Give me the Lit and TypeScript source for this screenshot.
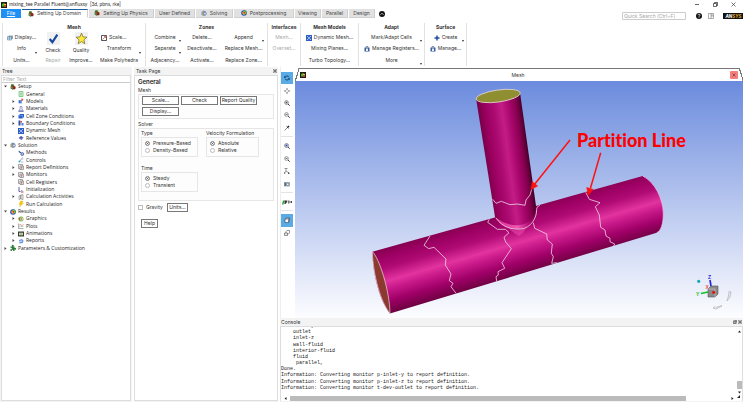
import { LitElement, html, css, svg } from "lit";
import { customElement } from "lit/decorators.js";
import { classMap } from "lit/directives/class-map.js";

/* ---- icon set, every glyph on a 12x12 grid ---- */
const glyphs: Record<string, unknown> = {
  app: svg`<rect width="12" height="12" fill="#1c1c10"/><path d="M2 9V4l4-2v7z" fill="#3fb53a"/><path d="M6 3l4 1v3H6z" fill="#f4c430"/><path d="M6 7h4v3H6z" fill="#d8352a"/>`,
  setup: svg`<circle cx="5" cy="4" r="3.6" fill="#6b5b1f"/><path d="M1 5l5 4v3L1 9z" fill="#3d8a3c"/><circle cx="8" cy="7.600" r="3.600" fill="#b5372c"/><path d="M6 6h4M6 9h4M8 5v5" stroke="#3a2a16" stroke-width="1"/><path d="M2 2l3-1 3 2" stroke="#3f9a3f" stroke-width="1.500" fill="none"/>`,
  solution: svg`<path d="M1 4l4-3 5 2v7l-4 2-5-2z" fill="#7f93b8"/><path d="M2 4l3 1v6L2 9z" fill="#c9a43b"/><circle cx="8" cy="7" r="3" fill="#c5d2ea" stroke="#4a63a0" stroke-width="1"/>`,
  results: svg`<circle cx="6" cy="6" r="5.600" fill="#2446c8"/><path d="M6 .4a5.600 5.600 0 0 1 5 8L6 6z" fill="#28b14a"/><circle cx="6" cy="6" r="3.400" fill="#f5d21f"/><circle cx="6.500" cy="5.600" r="1.900" fill="#e0301e"/>`,
  params: svg`<path d="M1 3h3a2 2 0 1 1 3 0h2v3a2 2 0 1 1 0 3v3H6a1.500 1.500 0 1 0-2 0H1V8a1.600 1.600 0 1 0 0-2z" fill="#2e7d3c"/>`,
  page: svg`<path d="M2 1h8v10H2z" fill="#d9f2dc" stroke="#58b368" stroke-width="1.300"/><path d="M4 4h4M4 6h4M4 8h4" stroke="#58b368"/>`,
  models: svg`<path d="M1 4h7v7H1z" fill="#7fa4e6"/><path d="M2 5h3v5H2z" fill="#3565c9"/><path d="M7 1l4 1-2 4-3-1z" fill="#e0564b"/>`,
  materials: svg`<path d="M4 1h4v5l3 4v1H1v-1l3-4z" fill="#e3e5f6" stroke="#5b62ab" stroke-width="1"/><path d="M2 9h8v2H2z" fill="#5b62ab"/>`,
  cell: svg`<path d="M1 5l3-3h8v6l-3 3H1z" fill="#2a62c8"/><path d="M1 5h8v6" stroke="#9cc0f5" stroke-width="1" fill="none"/>`,
  boundary: svg`<path d="M1 1h4v10H1z" fill="#2950b0"/><path d="M5 2h3v3H5z" fill="#d6493c"/><path d="M7 6h4v5H7z" fill="#4d7be0"/><path d="M5 6h2" stroke="#d6493c"/>`,
  dynamic: svg`<rect width="12" height="12" fill="#2d5fc4"/><path d="M2 2l3 3M10 2L7 5M2 10l3-3M10 10L7 7" stroke="#fff" stroke-width="1.300"/><circle cx="6" cy="6" r="1.500" fill="#d6e4ff"/>`,
  values: svg`<path d="M1 6l5-4 5 3-4 5z" fill="#4a49b5"/><path d="M3 6l4 1 3-2" stroke="#bdbcf2" fill="none"/>`,
  methods: svg`<path d="M2 1l3 3-1 2-3-2z" fill="#3458a8"/><path d="M4 4l5 5" stroke="#3458a8" stroke-width="2"/><circle cx="8.500" cy="8" r="3" fill="#a7b6dd" stroke="#2d468b" stroke-width="1.200"/>`,
  controls: svg`<path d="M9 1L4 8" stroke="#6b86a0" stroke-width="1.300"/><circle cx="3" cy="9" r="2" fill="#3ea0d0"/><path d="M6 10h5M8 4h3" stroke="#7c8a95"/>`,
  report: svg`<path d="M1 1h8v8H1z" fill="#eee" stroke="#555" stroke-width="1"/><path d="M4 4h7v7H4z" fill="#fff" stroke="#555" stroke-width="1"/><path d="M5 6h5M5 8h5M7 5v6" stroke="#a05a6a"/>`,
  init: svg`<path d="M2 0v9h3" stroke="#333a90" stroke-width="1.600" fill="none"/><path d="M6 10h5" stroke="#c33c3c" stroke-width="2"/><path d="M6 6l3 2" stroke="#333a90"/>`,
  calc: svg`<path d="M2 11V4l3-2v8zM6 10V2l4-1v10z" fill="#eee" stroke="#666" stroke-width="1"/>`,
  run: svg`<path d="M5 0h5L8 4h3L3 12l2-5H2z" fill="#f6c90e" stroke="#d79a00" stroke-width=".5"/>`,
  graphics: svg`<circle cx="6" cy="6" r="5" fill="#7ab648"/><circle cx="7" cy="6" r="3" fill="#e7dca0"/><path d="M1 3l4 3-3 3z" fill="#c04a3c"/><path d="M7 4v4" stroke="#4762b0"/>`,
  plots: svg`<path d="M1 1v10h10" stroke="#5a5f66" stroke-width="1" fill="none"/><path d="M2 4l3-1 3 2 3-2" stroke="#d04b4b" fill="none"/><path d="M2 8l3-2 3 1 3-1" stroke="#4b9a5b" fill="none"/>`,
  anim: svg`<rect y="1" width="12" height="10" fill="#3a3f36"/><rect x="2" y="3.500" width="8" height="5" fill="#c6d6b0"/><path d="M4 6h4" stroke="#6d7f55"/>`,
  reports: svg`<path d="M2 4l6-2 3 3-1 5-7 1z" fill="#6f9ae3"/><path d="M3 7l5-1" stroke="#fff" stroke-width="1.500"/>`,
  display: svg`<path d="M3 1h9v7H3z" fill="#8aa9bf"/><path d="M1 3h8v7H1z" fill="#dcebf4" stroke="#44708f" stroke-width="1"/><path d="M1 6h8M5 3v7" stroke="#44708f"/>`,
  scale: svg`<path d="M1 1h10v10H1z" fill="#fff" stroke="#222" stroke-width="1.500"/><path d="M3 9l6-6M6 3h3v3" stroke="#b33" stroke-width="1.200" fill="none"/>`,
  check: svg`<rect width="12" height="12" fill="#f1f1f1"/><path d="M2.500 6.500l2.500 3 4.500-7" stroke="#17479e" stroke-width="2" fill="none"/>`,
  star: svg`<rect width="12" height="12" fill="#f1f1f1"/><path d="M6 1l1.400 3.500 3.600.3-2.800 2.400.9 3.600L6 8.900l-3.100 1.900.9-3.600L1 4.800l3.600-.3z" fill="#ffe93b" stroke="#77702a" stroke-width=".7"/>`,
  plus: svg`<path d="M6 1v10M1 6h10" stroke="#1f4e9e" stroke-width="3"/>`,
  manage: svg`<path d="M1 3h10v8H1z" fill="#3a5f9e"/><path d="M4 3V1h4v2" stroke="#27457a" fill="none"/><path d="M4 5h4v5H4z" fill="#e4edf9"/>`,
  refresh: svg`<path d="M10 4.500A4.400 4.400 0 0 0 2 4.500M2 7.500a4.400 4.400 0 0 0 8 0" stroke="#123a5e" stroke-width="1.700" fill="none"/><path d="M.5 1.500v4h4zM11.500 10.500v-4h-4z" fill="#123a5e"/>`,
  pan: svg`<path d="M6 0l2 3H4zM6 12l2-3H4zM0 6l3-2v4zM12 6L9 4v4z" fill="#444"/><path d="M5 5h2v2H5z" fill="#bbb"/>`,
  zoomIn: svg`<circle cx="5" cy="5" r="3.800" fill="#eef2f2" stroke="#555" stroke-width="1.200"/><path d="M3 5h4M5 3v4" stroke="#333" stroke-width="1.200"/><path d="M8 8l3.500 3.500" stroke="#444" stroke-width="2"/>`,
  zoomOut: svg`<circle cx="5" cy="5" r="3.800" fill="#eef2f2" stroke="#666" stroke-width="1.200"/><path d="M3 5h4" stroke="#333" stroke-width="1.200"/><path d="M8 8l3.500 3.500" stroke="#444" stroke-width="2"/>`,
  probe: svg`<path d="M1 11l6-6" stroke="#8a8a70" stroke-width="2"/><path d="M6 4l3-3 2 2-3 3z" fill="#222"/><path d="M5 3l4 4" stroke="#222" stroke-width="1.300"/>`,
  zoomFit: svg`<circle cx="5" cy="5" r="4" fill="#fff" stroke="#555" stroke-width="1.200"/><path d="M3 3h4v4H3z" fill="#2c4fa0"/><path d="M8 8l3.500 3.500" stroke="#444" stroke-width="2"/>`,
  axes: svg`<path d="M1 1h6M4 1v5L1 11M4 6l6 4" stroke="#555" stroke-width="1.200" fill="none"/><path d="M8 8l4 3-4 1zM0 8l3 3H0z" fill="#444"/>`,
  camera: svg`<rect y="2" width="12" height="9" fill="#a9b6c0"/><path d="M1 3h3v7H1z" fill="#5a6b7a"/><circle cx="7.500" cy="6.500" r="2.500" fill="#fff" stroke="#3d5266" stroke-width="1.200"/>`,
  cube: svg`<path d="M2 4l2-2h7v6l-2 3H2z" fill="#fff" stroke="#2b3c4c" stroke-width="1.200"/><path d="M2 4h7v7M9 4l2-2" stroke="#2b3c4c" stroke-width="1.200" fill="none"/>`,
  cubes: svg`<path d="M4 3l2-2h5v5L9 8H4z" fill="#fff" stroke="#444" stroke-width="1.100"/><path d="M1 6h6v5H1z" fill="#e8e8e8" stroke="#444" stroke-width="1.100"/>`,
  views: svg`<path d="M-4 11l2-8h3l-2 8z" fill="#22a52e"/><path d="M1 3h5v3L3 10H1z" fill="#333"/><path d="M7 3h4v6H8z" fill="#777"/><path d="M11 6h5M14 4l2 2-2 2" stroke="#222" stroke-width="1.500" fill="none"/>`,
};

const icon = (name: string, cls = "") =>
  html`<svg class="ic ${cls}" viewBox="0 0 12 12" aria-hidden="true">${glyphs[name]}</svg>`;

const shared = css`
  :host { display: block; font-family: Inter, Roboto, "Liberation Sans", sans-serif; font-size: 5px; line-height: 7px; color: #333; }
  * { box-sizing: border-box; }
  button, input { font: inherit; color: inherit; margin: 0; }
  button { background: none; border: 0; padding: 0; white-space: nowrap; display: flex; align-items: center; justify-content: center; }
  .ic { width: 6px; height: 6px; flex: none; overflow: visible; }
`;

@customElement("title-strip")
class TitleStrip extends LitElement {
  static styles = [shared, css`
    .title { display: flex; align-items: center; height: 9px; padding: 0 7px 0 1px; gap: 2px; }
    .title span { flex: 1; font-family: Lato, sans-serif; color: #333; }
    .win { width: 6px; height: 6px; margin-left: 10px; }
    .win svg { width: 5px; height: 5px; }
    .bar { display: flex; align-items: flex-start; height: 12px; }
    .tabs { display: flex; align-items: stretch; height: 9px; padding-left: 1px; gap: 1px; flex: 1; }
    .tab { background: #e1e1e1; border: solid #cfcfcf; border-width: 0 1px 1px 0; gap: 3px; color: #444; }
    .tab.file { width: 20px; background: #1e90f5; color: #fff; border: 0; text-decoration: underline; }
    .tab.on { background: #fff; border-top: 1px solid #1d5f9c; border-bottom-color: #fff; }
    .w66 { width: 66px; } .w65 { width: 65px; } .w40 { width: 40px; } .w37 { width: 37px; } .w60 { width: 60px; } .w26 { width: 26px; }
    .round { width: 6px; height: 6px; align-self: center; margin-left: 3px; }
    .tools { display: flex; align-items: center; gap: 6px; height: 12px; padding-top: 1px; }
    input { width: 64px; height: 8px; border: 1px solid #ccc; border-radius: 1px; padding: 0 1px; background: #fff; margin-right: 4px; }
    input::placeholder { color: #a5a5a5; opacity: 1; }
    .ansys { width: 20px; height: 6px; margin-left: 3px; }
  `];
  render() {
    const tabs: [string, string, string][] = [
      ["Setting Up Domain", "w66 on", "setup"], ["Setting Up Physics", "w65", "setup"], ["User Defined", "w40", ""],
      ["Solving", "w37", "solution"], ["Postprocessing", "w60", "results"], ["Viewing", "w26", ""], ["Parallel", "w26", ""], ["Design", "w26", ""],
    ];
    return html`
      <div class="title">${icon("app")}<span>mixing_tee Parallel Fluent@anfluxsy&nbsp; [3d, pbns, rke]</span>
        <button class="win" aria-label="Minimize"><svg viewBox="0 0 10 10"><path d="M0 5h8" stroke="#333" stroke-width="1.500"/></svg></button>
        <button class="win" aria-label="Restore"><svg viewBox="0 0 10 10"><path d="M1 3h6v6H1zM3 3V1h6v6H7" fill="none" stroke="#333" stroke-width="1.500"/></svg></button>
        <button class="win" aria-label="Close"><svg viewBox="0 0 10 10"><path d="M1 1l8 8M9 1L1 9" stroke="#333" stroke-width="1.300"/></svg></button>
      </div>
      <div class="bar">
        <nav class="tabs"><button class="tab file">File</button>
          ${tabs.map(([t, c, i]) => html`<button class="tab ${c}">${i ? icon(i) : ""}${t}</button>`)}
          <button class="round" aria-label="Collapse ribbon"><svg class="ic" viewBox="0 0 12 12"><circle cx="6" cy="6" r="6" fill="#111"/><path d="M3 7.500l3-3 3 3" stroke="#fff" stroke-width="1.500" fill="none"/></svg></button>
        </nav>
        <div class="tools">
          <input type="search" placeholder="Quick Search (Ctrl+F)" aria-label="Quick Search">
          <button aria-label="Help"><svg class="ic" viewBox="0 0 12 12"><circle cx="6" cy="6" r="6" fill="#111"/><path d="M4 4.500c0-3 4.300-2.500 4 0C7.800 6 6 6 6 7.500M6 8.800v1.400" stroke="#fff" stroke-width="1.500" fill="none"/></svg></button>
          <button aria-label="Layout"><svg class="ic" viewBox="0 0 12 12"><path d="M1 1h10v10H1zM6 1v10M6 6h5M8 1v5" fill="none" stroke="#777" stroke-width="1.200"/></svg></button>
          <svg class="ansys" viewBox="0 0 40 12" role="img" aria-label="ANSYS"><rect width="40" height="12" fill="#111"/><text x="5" y="9" font-size="9" font-weight="700" font-style="italic" font-family="Inter, sans-serif" fill="#fff">AN<tspan fill="#e0a92c">SYS</tspan></text></svg>
        </div>
      </div>`;
  }
}

type Cell = { t: string; i?: string; more?: boolean; off?: boolean; big?: boolean };
type Column = { c: string; cells: Cell[] };
const groups: { title: string; cls: string; cols: Column[] }[] = [
  { title: "Mesh", cls: "g-mesh", cols: [
    { c: "c35", cells: [{ t: "Display...", i: "display" }, { t: "Info", more: true }, { t: "Units..." }] },
    { c: "c28", cells: [{ t: "Check", i: "check", big: true }, { t: "Repair", off: true }] },
    { c: "c28", cells: [{ t: "Quality", i: "star", big: true }, { t: "Improve..." }] },
    { c: "c48", cells: [{ t: "Scale...", i: "scale" }, { t: "Transform", more: true }, { t: "Make Polyhedra" }] }] },
  { title: "Zones", cls: "g-zones", cols: [
    { c: "c35", cells: [{ t: "Combine", more: true }, { t: "Separate", more: true }, { t: "Adjacency..." }] },
    { c: "c39", cells: [{ t: "Delete..." }, { t: "Deactivate..." }, { t: "Activate..." }] },
    { c: "c44", cells: [{ t: "Append", more: true }, { t: "Replace Mesh..." }, { t: "Replace Zone..." }] }] },
  { title: "Interfaces", cls: "g-int", cols: [{ c: "grow", cells: [{ t: "Mesh...", off: true }, { t: "Overset...", off: true }, { t: "" }] }] },
  { title: "Mesh Models", cls: "g-mod", cols: [{ c: "grow", cells: [{ t: "Dynamic Mesh...", i: "dynamic" }, { t: "Mixing Planes..." }, { t: "Turbo Topology..." }] }] },
  { title: "Adapt", cls: "g-adapt", cols: [{ c: "grow", cells: [{ t: "Mark/Adapt Cells", more: true }, { t: "Manage Registers...", i: "manage" }, { t: "More", more: true }] }] },
  { title: "Surface", cls: "g-surf", cols: [{ c: "grow", cells: [{ t: "Create", i: "plus", more: true }, { t: "Manage...", i: "manage" }, { t: "" }] }] },
];

@customElement("ribbon-bar")
class RibbonBar extends LitElement {
  static styles = [shared, css`
    .ribbon { display: flex; height: 46px; padding: 2px 0 1px 2px; }
    .group { border-right: 1px solid #e2e2e2; display: flex; flex-direction: column; flex: none; }
    .group:first-child { border-left: 1px solid #e2e2e2; }
    h2 { margin: 0; font-size: 5px; line-height: 9px; font-weight: 700; text-align: center; }
    .cols { display: flex; height: 34px; justify-content: center; }
    .col { display: grid; grid-template-rows: repeat(3, minmax(0, 1fr)); flex: none; }
    .col.grow { flex: 1; }
    button { position: relative; gap: 2px; min-width: 0; }
    .big { grid-row: span 2; flex-direction: column; }
    .big .ic { width: 13px; height: 13px; }
    .off { color: #aaa; }
    .more::after { content: ""; position: absolute; right: 2px; bottom: 1px; border: 1px solid transparent; border-top: 2px solid #333; border-bottom: 0; }
    .g-mesh { width: 144px; } .g-mesh .cols { justify-content: flex-start; padding-left: 1px; }
    .g-zones { width: 122px; } .g-int { width: 33px; } .g-mod { width: 58px; } .g-adapt { width: 66px; } .g-surf { width: 42px; }
    .c35 { width: 35px; } .c28 { width: 28px; } .c48 { width: 48px; } .c39 { width: 39px; } .c44 { width: 44px; }
    .c48 button:has(.ic) { justify-content: flex-start; padding-left: 6px; }
  `];
  render() {
    return html`<div class="ribbon">${groups.map(g => html`<section class="group ${g.cls}"><h2>${g.title}</h2>
      <div class="cols">${g.cols.map(col => html`<div class="col ${col.c}">${col.cells.map(c => c.t
        ? html`<button class=${classMap({ big: !!c.big, off: !!c.off, more: !!c.more })} ?disabled=${!!c.off}>${c.i ? icon(c.i) : ""}${c.t}</button>`
        : html`<span></span>`)}</div>`)}</div></section>`)}</div>`;
  }
}

const tree: [number, string, string, string][] = [
  [0, "v", "setup", "Setup"], [1, "", "page", "General"], [1, ">", "models", "Models"], [1, ">", "materials", "Materials"],
  [1, ">", "cell", "Cell Zone Conditions"], [1, ">", "boundary", "Boundary Conditions"], [1, "", "dynamic", "Dynamic Mesh"],
  [1, "", "values", "Reference Values"], [0, "v", "solution", "Solution"], [1, "", "methods", "Methods"], [1, "", "controls", "Controls"],
  [1, ">", "report", "Report Definitions"], [1, ">", "report", "Monitors"], [1, "", "report", "Cell Registers"], [1, "", "init", "Initialization"],
  [1, ">", "calc", "Calculation Activities"], [1, "", "run", "Run Calculation"], [0, "v", "results", "Results"], [1, ">", "graphics", "Graphics"],
  [1, ">", "plots", "Plots"], [1, ">", "anim", "Animations"], [1, ">", "reports", "Reports"], [0, ">", "params", "Parameters & Customization"],
];

@customElement("outline-tree")
class OutlineTree extends LitElement {
  static styles = [shared, css`
    :host { display: flex; flex-direction: column; background: #f3f3f3; padding: 0 1px 2px; }
    h2 { margin: 0; font-size: 5px; font-weight: 400; line-height: 8px; padding-left: 1px; }
    .body { flex: 1; background: #fff; border: 1px solid #ddd; }
    input { display: block; width: 100%; height: 7px; border: 0; border-bottom: 1px solid #ccc; padding: 0 1px; background: #fff; }
    input::placeholder { color: #aaa; opacity: 1; }
    ul { list-style: none; margin: 0; padding: 0 0 0 1px; height: 169px; display: grid; grid-auto-rows: minmax(0, 1fr); font-family: "Open Sans", "Noto Sans", sans-serif; color: #222; }
    li { display: flex; align-items: center; gap: 2px; }
    li.d1 { padding-left: 8px; }
    .tw { width: 5px; height: 5px; flex: none; }
    svg.tw { width: 3px; height: 3px; margin: 1px; }
  `];
  render() {
    return html`<h2>Tree</h2><div class="body"><input placeholder="Filter Text" aria-label="Filter Text">
      <ul role="tree">${tree.map(([d, m, i, t]) => html`<li role="treeitem" class="d${d}">
        ${m ? html`<svg class="tw" viewBox="0 0 6 6"><path d=${m === "v" ? "M0 1h6L3 5z" : "M1 0l4 3-4 3z"} fill="#444"/></svg>` : html`<span class="tw"></span>`}
        ${icon(i)}<span>${t}</span></li>`)}</ul></div>`;
  }
}

@customElement("task-page")
class TaskPage extends LitElement {
  static styles = [shared, css`
    :host { display: flex; flex-direction: column; background: #f3f3f3; padding: 0 0 2px; }
    header { display: flex; justify-content: space-between; align-items: center; height: 8px; padding: 0 1px 0 2px; }
    .x svg { width: 4px; height: 4px; }
    .body { flex: 1; background: #fff; border: 1px solid #ddd; padding: 2px 3px; }
    h3 { margin: 0; font-size: 6px; line-height: 8px; font-weight: 600; color: #222; }
    fieldset { border: 0; margin: 0; padding: 0; min-width: 0; display: block; }
    legend { padding: 0; line-height: 8px; display: block; }
    .box { border: 1px solid #e6e6e6; background: #fdfdfd; }
    .btns { display: grid; grid-template-columns: repeat(3, 37px); gap: 2px; padding: 1px 3px; height: 25px; align-content: start; }
    .btn { height: 9px; border: 1px solid #777; background: #fff; }
    .solver { height: 73px; padding: 0 2px; display: grid; grid-template-columns: 57px 53px; column-gap: 8px; grid-template-rows: 35px 28px; }
    .sec { margin-top: 1px; }
    .radios { padding: 2px 3px; height: 20px; display: grid; grid-auto-rows: 7px; align-content: center; }
    label { display: flex; align-items: center; gap: 3px; white-space: nowrap; }
    input { appearance: none; width: 5px; height: 5px; border: 1px solid #bbb; background: #fff; flex: none; }
    input[type="radio"] { border-radius: 50%; }
    input[type="radio"]:checked { background: #333; box-shadow: inset 0 0 0 1px #fff; border-color: #999; }
    .row { display: flex; gap: 4px; margin-top: 2px; align-items: center; }
    .units { width: 21px; }
    .help { width: 17px; margin: 7px 0 0 3px; }
  `];
  private choice(name: string, options: string[]) {
    return html`<div class="box radios">${options.map((o, i) => html`<label><input type="radio" name=${name} ?checked=${i === 0}>${o}</label>`)}</div>`;
  }
  render() {
    return html`<header><span>Task Page</span><button class="x" aria-label="Close"><svg viewBox="0 0 8 8"><path d="M0 0h8v8H0z" fill="#bbb"/><path d="M1 1l6 6M7 1L1 7" stroke="#333"/></svg></button></header>
      <div class="body"><h3>General</h3>
        <fieldset><legend>Mesh</legend><div class="box btns">${["Scale...", "Check", "Report Quality", "Display..."].map(b => html`<button class="btn">${b}</button>`)}</div></fieldset>
        <fieldset class="sec"><legend>Solver</legend><div class="box solver">
          <fieldset><legend>Type</legend>${this.choice("type", ["Pressure-Based", "Density-Based"])}</fieldset>
          <fieldset><legend>Velocity Formulation</legend>${this.choice("velocity", ["Absolute", "Relative"])}</fieldset>
          <fieldset><legend>Time</legend>${this.choice("time", ["Steady", "Transient"])}</fieldset>
        </div></fieldset>
        <div class="row"><label><input type="checkbox">Gravity</label><button class="btn units">Units...</button></div>
        <button class="btn help">Help</button>
      </div>`;
  }
}

@customElement("view-tools")
class ViewTools extends LitElement {
  static styles = [shared, css`
    :host { display: flex; flex-direction: column; padding: 5px 2px 0 0; background: #fff; border-left: 1px solid #eee; }
    .set { display: flex; flex-direction: column; }
    .set + .set { margin-top: 2px; border-top: 1px solid #e4e4e4; padding-top: 3px; }
    button { flex: 1; }
    button.on { background: #5aaae6; }
    .s5 { height: 62px; } .s4 { height: 54px; } .s1 { height: 16px; } .s2 { height: 29px; }
  `];
  render() {
    const sets: [string, string[]][] = [
      ["s5", ["refresh", "pan", "zoomIn", "zoomOut", "probe"]], ["s4", ["zoomFit", "zoomOut", "axes", "camera"]], ["s1", ["views"]], ["s2", ["cube", "cubes"]],
    ];
    return html`${sets.map(([c, names]) => html`<div class="set ${c}">${names.map(n =>
      html`<button aria-label=${n} class=${classMap({ on: n === "refresh" || n === "cube" })}>${icon(n)}</button>`)}</div>`)}`;
  }
}

@customElement("mesh-view")
class MeshView extends LitElement {
  static styles = [shared, css`
    :host { display: flex; flex-direction: column; }
    .tab { display: flex; align-items: center; height: 13px; margin: 1px 1px 0 4px; padding: 0 3px 0 1px; border-top: 1px solid #777; position: relative; }
    .tab::before, .tab::after { content: ""; position: absolute; top: -1px; height: 13px; width: 4px; }
    .tab::before { left: -4px; background: linear-gradient(107deg, transparent 45%, #777 46% 60%, transparent 61%); }
    .tab::after { right: -1px; background: #fff linear-gradient(73deg, transparent 45%, #777 46% 60%, transparent 61%); }
    .name { flex: 1; text-align: center; }
    .x { width: 8px; height: 8px; background: #f47f7f; border-radius: 1px; margin-right: 1px; }
    .x svg { width: 4px; height: 4px; }
    .stage { flex: 1; background: linear-gradient(#6b8bdd, #fdfdff); display: flex; }
    .stage svg { width: 100%; height: 237px; display: block; }
    .label { font: 900 18px Lato, "Open Sans", sans-serif; font-variant-ligatures: none; fill: #f00; }
    .axis { font: 700 5px "Liberation Sans", sans-serif; }
  `];
  render() {
    return html`<div class="tab">${icon("app")}<span class="name">Mesh</span><button class="x" aria-label="Close view"><svg viewBox="0 0 8 8"><path d="M1 1l6 6M7 1L1 7" stroke="#733" stroke-width="1.400"/></svg></button></div>
    <div class="stage"><svg viewBox="295 81 448 237" role="img" aria-label="Tee mesh with partition lines">
      <defs>
        <linearGradient id="run" gradientUnits="userSpaceOnUse" x1="372" y1="252" x2="390" y2="313.500">
          <stop offset="0" stop-color="#86004f"/><stop offset=".12" stop-color="#9b0062"/><stop offset=".3" stop-color="#b00a74"/><stop offset=".5" stop-color="#e2339f"/><stop offset=".62" stop-color="#c9198a"/><stop offset=".8" stop-color="#a00068"/><stop offset="1" stop-color="#6d0040"/>
        </linearGradient>
        <linearGradient id="branch" gradientUnits="userSpaceOnUse" x1="485" y1="156" x2="529" y2="150">
          <stop offset="0" stop-color="#7a0048"/><stop offset=".15" stop-color="#9a005f"/><stop offset=".35" stop-color="#ad0b72"/><stop offset=".52" stop-color="#c41c86"/><stop offset=".7" stop-color="#a8066c"/><stop offset=".85" stop-color="#86004f"/><stop offset="1" stop-color="#3c0024"/>
        </linearGradient>
        <linearGradient id="collar" gradientUnits="userSpaceOnUse" x1="496" y1="220" x2="536" y2="214">
          <stop offset="0" stop-color="#d8288f"/><stop offset=".5" stop-color="#ee5ab4"/><stop offset=".8" stop-color="#b00a74"/><stop offset="1" stop-color="#6d0040"/>
        </linearGradient>
      </defs>
      <path d="M372.300 251.700L642.700 176C655 182 663 199 663.300 213C663.300 224 661 231 656.700 232.700L390 313.500C379 300 373 275 372.300 251.700Z" fill="url(#run)"/>
      <path d="M642.700 176C655 182 663 199 663.300 213C663.300 224 661 231 656.700 232.700" fill="none" stroke="#e9c9e4" stroke-width=".7"/>
      <path d="M372.300 251.700C379 257 390 292 390 313.500C381 303 373 275 372.300 251.700Z" fill="#8c3a30" stroke="#e8d8e0" stroke-width=".7"/>
      <path d="M508 228C513 231 522 231 527 227L523 233L519 236L514 233Z" fill="#ea48aa" opacity=".6"/>
      <path d="M476.300 100L495 217C502 228 512 230 521 229C530 228 535 222 536 206L520 92.500Z" fill="url(#branch)"/>
      <path d="M495 217C502 228 512 230 521 229C530 228 534 222 536 211C533 219 528 224 520 225C511 226 503 223 495 217Z" fill="url(#collar)"/>
      <ellipse cx="498.200" cy="96" rx="22.200" ry="6" transform="rotate(-8 498.200 96)" fill="#8f8f31" stroke="#e4d6dc" stroke-width=".8"/>
      <g fill="none" stroke="#eed5e4" stroke-width=".8">
        <path d="M430 236l-6 9.300 4.700 3.300 5.300-1.300 12 11.700-.7 6 5.700 9-1.700 6.700 3.700 2.600-2 3.400 5 6.600"/>
        <path d="M489.300 219.300l-1.600 3 9.600 7h8l3.700 3.400-5 4.600 1.700 4.700 5.600 6.700-9.300 14 2.700 5.600-6.700 3.400.3 3.300-2.300 1.700.7 4.600"/>
        <path d="M533.300 222.700l1.400 5.600 12 5.700.6 6 5 4-1 9.300 2 3.400-1.600 6.600 5.300-.6"/>
        <path d="M585.700 192.300l3.600 7 10.700 3.400-4.700 4 4 8.300 1.400 12.300 4.300 2.700 1 6 4 2.300v3.400l4.700 2.300-1.400 2.700"/>
        <path d="M492.700 199.300l3.300 4 5.300-2 8.700 3.400 7.300-.7 7.700 1.300 1-5.300 4-5 1.700-5.700"/>
        <path d="M496 218C502 227 512 230 521 229C531 228 536 218 536.500 212C536 208 538 206 540 205"/>
      </g>
      <g stroke="#f11" stroke-width="1.500" fill="#f11">
        <path d="M570 140L534 185M600.700 152.700L590.500 188"/>
        <path d="M531 189.500l1.200-8 5.500 4.600zM588.200 195.500l-1.500-8 6.500 1.800z" stroke-width=".5"/>
      </g>
      <text class="label" x="577" y="147">Partition Line</text>
      <circle cx="698.700" cy="281.300" r="1.600" fill="#16a7b0"/>
      <path d="M708 289l3-3h7v8l-3 3h-7z" fill="#8b8b8b" stroke="#555" stroke-width=".6"/><path d="M708 289h7v8" fill="none" stroke="#ddd" stroke-width=".5"/>
      <circle cx="713.700" cy="292.300" r="1.600" fill="#d81a1a"/>
      <path d="M711 286l-1-6" stroke="#2626e0" stroke-width="1.700"/><path d="M708 292l-7 1.500" stroke="#10c020" stroke-width="1.700"/>
      <text class="axis" x="708" y="279" fill="#2626e0">Z</text><text class="axis" x="696" y="296" fill="#10c020">Y</text><text class="axis" x="705.500" y="289" fill="#e05050">X</text>
      <path d="M713 308l2-1.500 1 1 6-2M713 308l3 1 6-3M729 291.500l2 .5-1 5-3 4 1.500-5z" fill="none" stroke="#b5b5b5" stroke-width=".8"/>
    </svg></div>`;
  }
}

@customElement("text-console")
class TextConsole extends LitElement {
  static styles = [shared, css`
    :host { background: #f3f3f3; padding: 0 0 2px; }
    header { display: flex; align-items: center; height: 8px; padding: 0 1px; gap: 1px; }
    header span { flex: 1; }
    header svg { width: 4px; height: 4px; display: block; }
    .frame { display: grid; grid-template-columns: minmax(0, 1fr) 5px; grid-template-rows: 68px 6px; background: #fff; border: 1px solid #ddd; border-bottom: 0; }
    .log { overflow: hidden; display: flex; flex-direction: column; justify-content: flex-end; padding: 0 0 4px; }
    .lines { height: 68px; flex: none; display: grid; grid-auto-rows: minmax(0, 1fr); font-family: "Liberation Mono", monospace; line-height: 6px; white-space: pre; color: #222; }
    .v { display: flex; flex-direction: column; align-items: center; padding: 3px 0 1px; gap: 2px; }
    .v i { flex: 1; } 
    .h { display: flex; align-items: center; gap: 3px; padding: 0 3px; }
    .thumb { background: #bbb; }
    .v .thumb { width: 5px; height: 8px; }
    .h .thumb { height: 5px; width: 88%; }
    .h i { flex: 1; }
    .arrow { width: 3px; height: 3px; flex: none; }
  `];
  private tri(d: string) { return html`<svg class="arrow" viewBox="0 0 6 6"><path d=${d} fill="#222"/></svg>`; }
  render() {
    const log = ["    inlet-y", "    outlet", "    inlet-z", "    wall-fluid", "    interior-fluid", "    fluid", "     parallel,", "Done.",
      "Information: Converting monitor p-inlet-y to report definition.", "Information: Converting monitor p-inlet-z to report definition.",
      "Information: Converting monitor t-dev-outlet to report definition."];
    return html`<header><span>Console</span>
      <button aria-label="Float"><svg viewBox="0 0 8 8"><path d="M0 0h8v8H0z" fill="#bbb"/><path d="M1 3h4v4H1zM3 1h4v4" fill="none" stroke="#444"/></svg></button>
      <button aria-label="Close"><svg viewBox="0 0 8 8"><path d="M0 0h8v8H0z" fill="#bbb"/><path d="M1 1l6 6M7 1L1 7" stroke="#333"/></svg></button></header>
      <div class="frame">
        <div class="log"><div class="lines">${log.map(l => html`<div>${l}</div>`)}</div></div>
        <div class="v">${this.tri("M0 5h6L3 1z")}<i></i><div class="thumb"></div>${this.tri("M0 1h6L3 5z")}</div>
        <div class="h">${this.tri("M5 0v6L1 3z")}<div class="thumb"></div><i></i>${this.tri("M1 0v6l4-3z")}</div>
        ${this.tri("M0 6L6 0v6z")}
      </div>`;
  }
}

@customElement("app-root")
class AppRoot extends LitElement {
  static styles = css`
    :host { display: flex; flex-direction: column; min-height: 100vh; background: #fff; }
    main { flex: 1; display: grid; grid-template-columns: 132px 144px minmax(0, 1fr); column-gap: 2px; grid-template-rows: minmax(0, 1fr); }
    .side { display: grid; grid-template-columns: 15px minmax(0, 1fr); grid-template-rows: minmax(0, 1fr) auto; }
    text-console { grid-column: span 2; display: block; }
  `;
  render() {
    return html`<title-strip></title-strip><ribbon-bar></ribbon-bar>
      <main><outline-tree></outline-tree><task-page></task-page>
        <div class="side"><view-tools></view-tools><mesh-view></mesh-view><text-console></text-console></div></main>`;
  }
}
